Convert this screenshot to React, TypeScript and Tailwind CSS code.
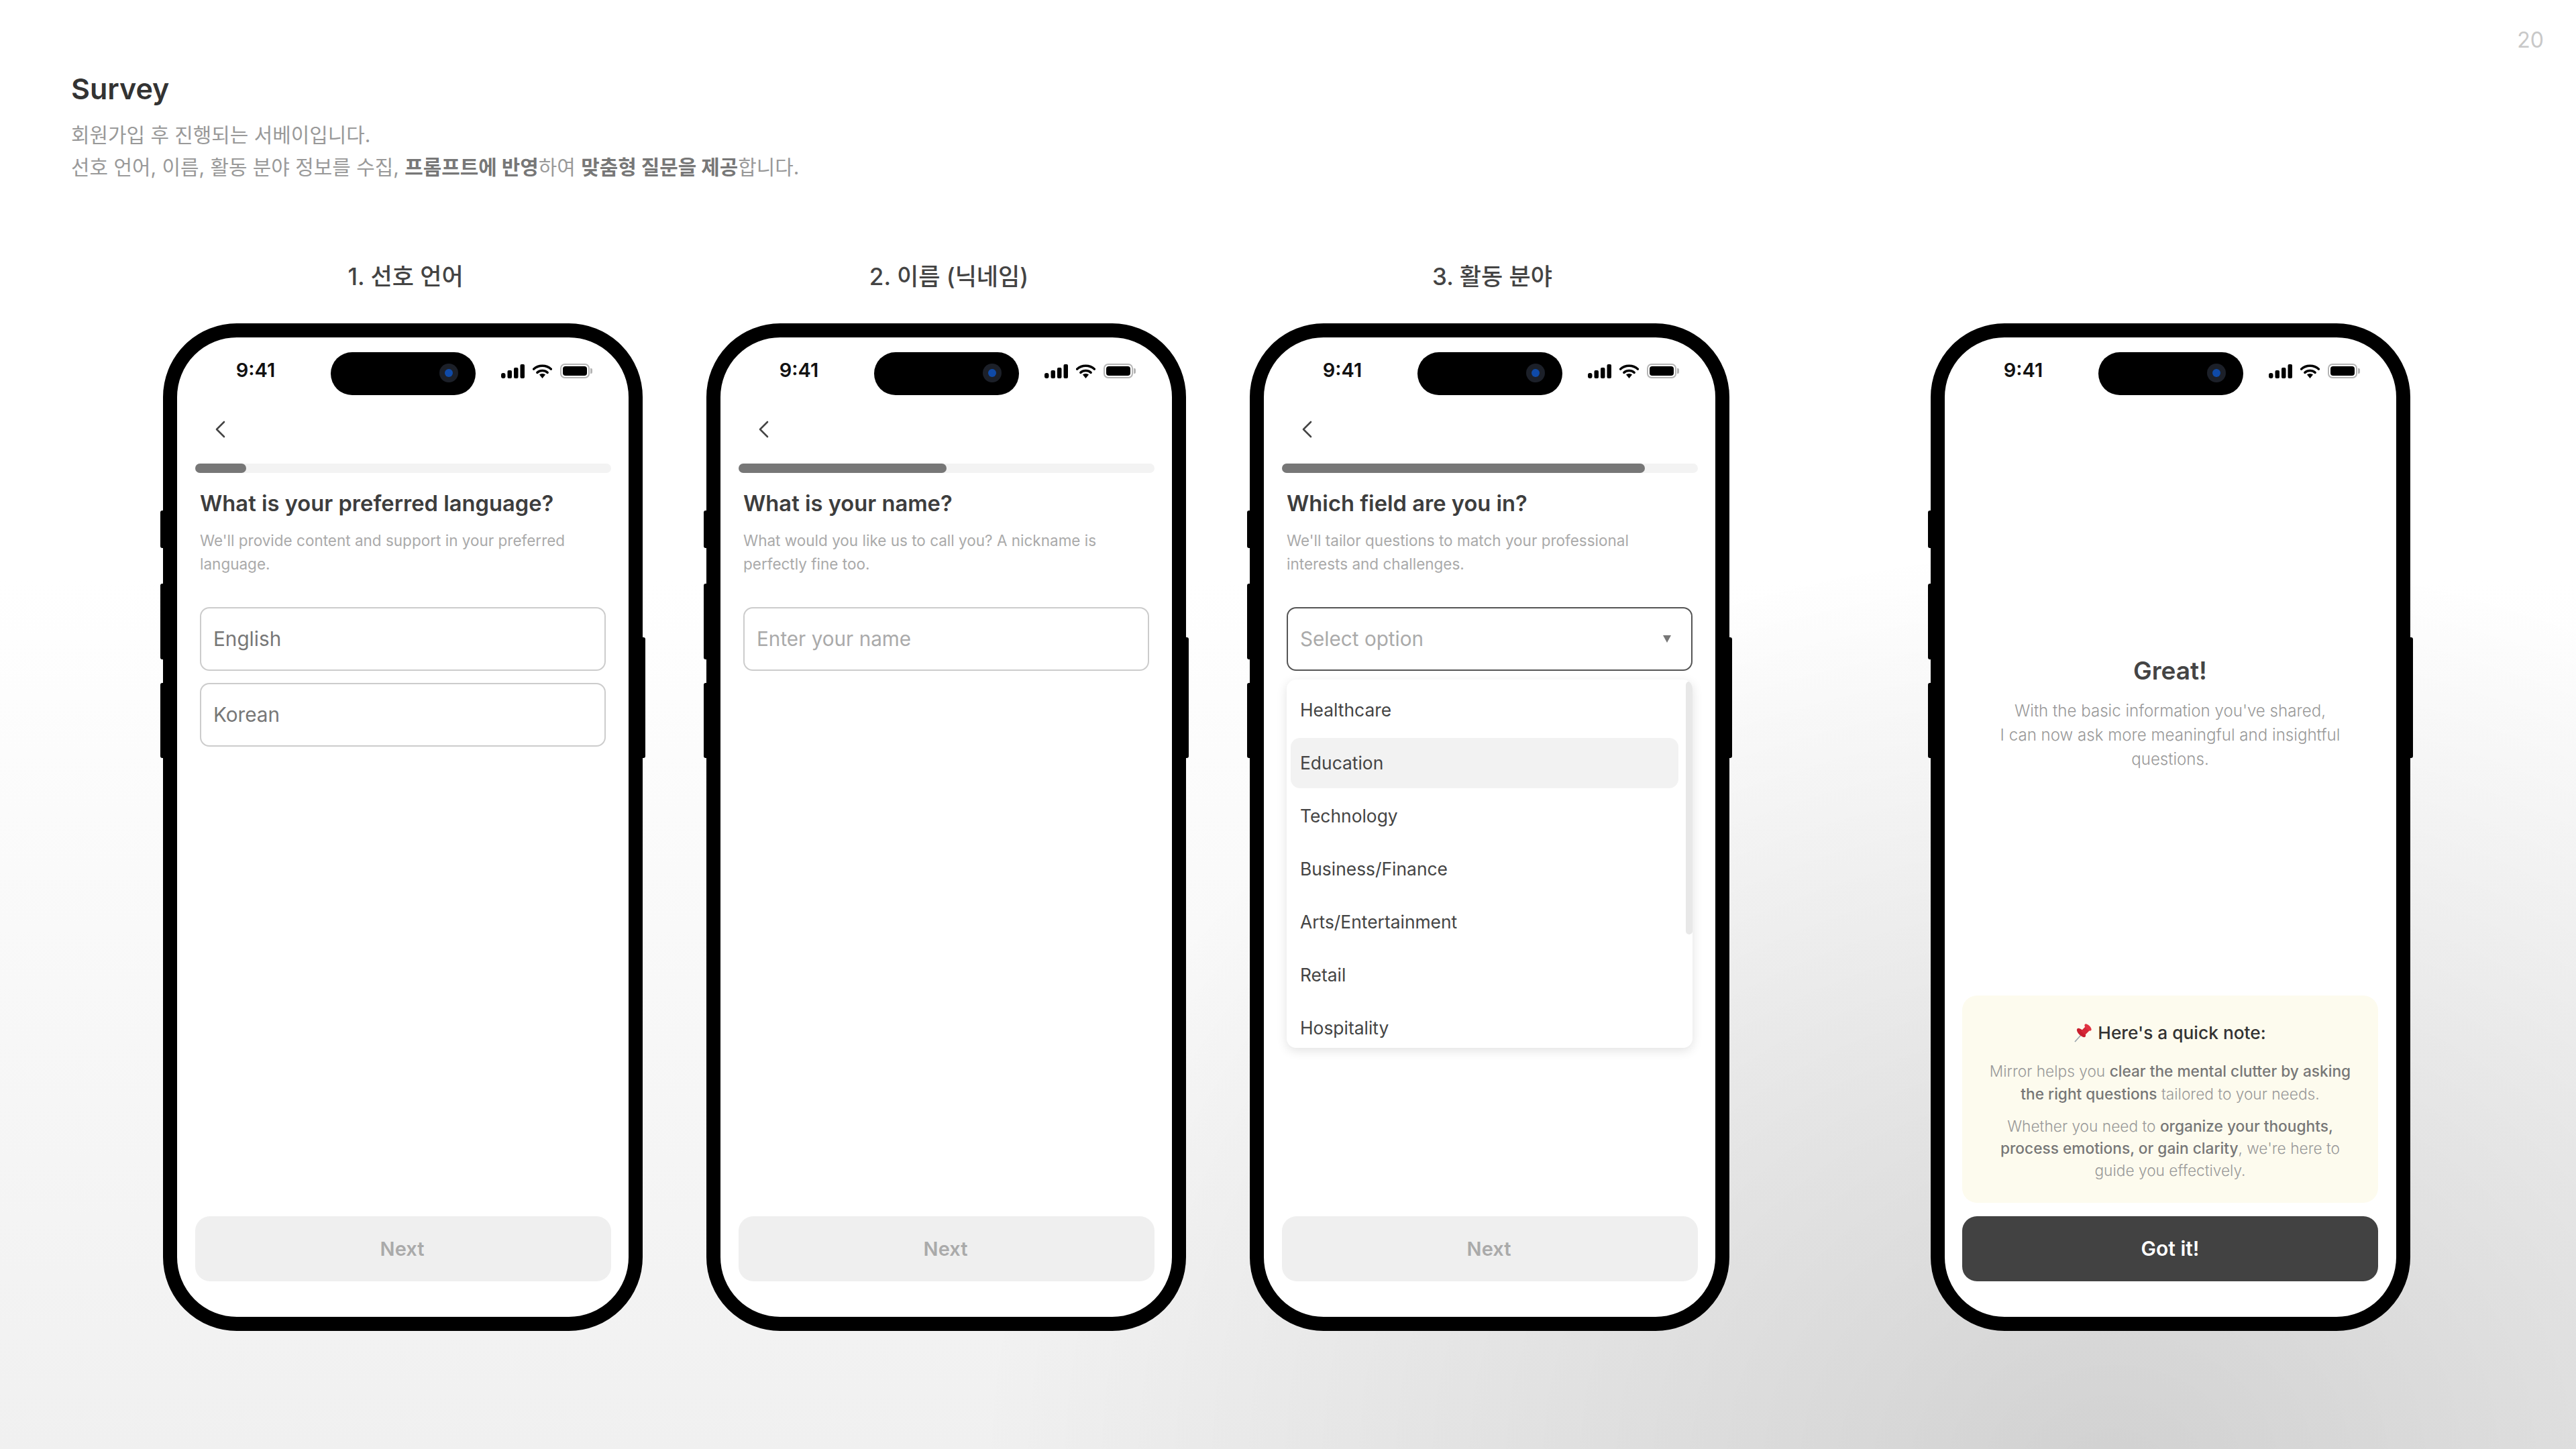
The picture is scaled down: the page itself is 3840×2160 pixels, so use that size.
import React from "react";

const SignalIcon = () => (
  <svg width="35" height="21" viewBox="0 0 35 21" fill="#000" className="block">
    <rect x="0" y="13" width="6.5" height="8" rx="3" />
    <rect x="9.5" y="9" width="6.5" height="12" rx="2" />
    <rect x="19" y="5" width="6.5" height="16" rx="2" />
    <rect x="28.5" y="0" width="6.5" height="21" rx="2" />
  </svg>
);

const WifiIcon = () => (
  <svg width="29" height="21" viewBox="0 0 29 21" fill="none" className="block">
    <path d="M1.5 7.2C8.8 0.6 20.2 0.6 27.5 7.2" stroke="#000" strokeWidth="3.4" strokeLinecap="round" />
    <path d="M6.8 12.4C11.2 8.6 17.8 8.6 22.2 12.4" stroke="#000" strokeWidth="3.4" strokeLinecap="round" />
    <path d="M10 15.6C12.6 13.6 16.4 13.6 19 15.6L14.5 21Z" fill="#000" />
  </svg>
);

const BatteryIcon = () => (
  <div className="flex items-center">
    <div className="w-[44px] h-[22px] rounded-[7px] border-2 border-[#b5b5b5] p-[2px]">
      <div className="w-full h-full rounded-[4px] bg-black" />
    </div>
    <div className="ml-[1px] w-[3px] h-[8px] rounded-r-[2px] bg-[#b5b5b5]" />
  </div>
);

const StatusBar = () => (
  <div className="flex items-center pt-[22px] shrink-0">
    <div className="w-[229px] pl-[5px] mb-[10px] text-center text-[29px] leading-[34px] font-semibold text-[#111]">
      9:41
    </div>
    <div className="relative w-[216px] h-[64px] rounded-full bg-black shrink-0">
      <div className="absolute left-[162px] top-[17px] w-[28px] h-[28px] rounded-full bg-[#1c2029]">
        <div className="ml-[8px] mt-[8px] w-[12px] h-[12px] rounded-full bg-[#0f4aa8]" />
      </div>
    </div>
    <div className="flex items-center pl-[38px] mb-[8px]">
      <SignalIcon />
      <div className="ml-[12px]">
        <WifiIcon />
      </div>
      <div className="ml-[12px]">
        <BatteryIcon />
      </div>
    </div>
  </div>
);

const Phone = ({ children }: { children: React.ReactNode }) => (
  <div className="relative w-[715px] h-[1502px] rounded-[110px] border-[21px] border-black bg-white shrink-0">
    {/* side buttons */}
    <div className="absolute left-[-25px] top-[258px] w-[4px] h-[56px] rounded-l-[3px] bg-black" />
    <div className="absolute left-[-25px] top-[367px] w-[4px] h-[113px] rounded-l-[3px] bg-black" />
    <div className="absolute left-[-25px] top-[515px] w-[4px] h-[112px] rounded-l-[3px] bg-black" />
    <div className="absolute right-[-25px] top-[447px] w-[4px] h-[180px] rounded-r-[3px] bg-black" />
    <div className="flex flex-col h-full">
      <StatusBar />
      {children}
    </div>
  </div>
);

const BackChevron = () => (
  <svg width="16" height="26" viewBox="0 0 16 26" fill="none" className="block ml-[29px] mt-[38px]">
    <path d="M14 2L3 13L14 24" stroke="#444" strokeWidth="2.6" strokeLinecap="round" strokeLinejoin="round" />
  </svg>
);

const Progress = ({ width }: { width: number }) => (
  <div className="mt-[38px] h-[14px] rounded-full bg-[#f3f3f3]">
    <div className="h-full rounded-full bg-[#777]" style={{ width }} />
  </div>
);

const Question = ({ title, lines }: { title: string; lines: string[] }) => (
  <div className="pl-[7px]">
    <div className="mt-[25px] text-[32.7px] leading-[40px] font-semibold text-[#3d3d3d] whitespace-nowrap">{title}</div>
    <div className="mt-[18px] text-[22.5px] leading-[35px] text-[#aaa] whitespace-nowrap">
      {lines[0]}
      <br />
      {lines[1]}
    </div>
  </div>
);

const NextButton = () => (
  <div className="mb-[53px] h-[97px] pr-[3px] rounded-[22px] bg-[#efefef] flex items-center justify-center text-[29px] font-semibold text-[#aaa]">
    Next
  </div>
);

const SurveyStep = ({
  progress,
  title,
  lines,
  children,
}: {
  progress: number;
  title: string;
  lines: string[];
  children: React.ReactNode;
}) => (
  <div className="flex flex-col flex-1 pl-[27px] pr-[26px]">
    <BackChevron />
    <Progress width={progress} />
    <Question title={title} lines={lines} />
    <div className="flex-1 mt-[47px] ml-[7px] w-[605px]">{children}</div>
    <NextButton />
  </div>
);

const TextField = ({ label, muted }: { label: string; muted?: boolean }) => (
  <div
    className={`h-[95px] rounded-[14px] border-2 border-[#ccc] flex items-center pl-[18px] text-[29.7px] ${
      muted ? "text-[#aaa]" : "text-[#777]"
    }`}
  >
    {label}
  </div>
);

const options = ["Healthcare", "Education", "Technology", "Business/Finance", "Arts/Entertainment", "Retail", "Hospitality"];

const Dropdown = () => (
  <>
    <div className="h-[95px] rounded-[14px] border-2 border-[#555] flex items-center justify-between pl-[18px] pr-[30px] text-[29.7px] text-[#aaa]">
      Select option
      <svg width="12" height="11" viewBox="0 0 12 11" className="block">
        <path d="M0 0H12L6 11Z" fill="#777" />
      </svg>
    </div>
    <div className="relative mt-[13px] h-[549px] overflow-hidden rounded-[14px] bg-white shadow-[0_4px_16px_rgba(0,0,0,0.12)] pt-[8px] pl-[6px]">
      <div className="flex flex-col gap-[4px]">
        {options.map((option, i) => (
          <div
            key={option}
            className={`w-[578px] h-[75px] shrink-0 rounded-[14px] flex items-center pl-[14px] text-[26.4px] text-[#444] ${
              i === 1 ? "bg-[#f2f2f2]" : ""
            }`}
          >
            {option}
          </div>
        ))}
      </div>
      <div className="absolute right-0 top-[3px] w-[10px] h-[377px] rounded-full bg-[#e8e8e8]" />
    </div>
  </>
);

const PinIcon = () => (
  <svg width="27" height="28" viewBox="0 0 27 28" className="block">
    <line x1="1" y1="27" x2="10" y2="17" stroke="#9aa4ad" strokeWidth="1.6" />
    <ellipse cx="10.5" cy="13.5" rx="8.5" ry="4" fill="#c91f2e" transform="rotate(45 10.5 13.5)" />
    <path d="M10 11L18 3L24 9L16 17Z" fill="#d62837" />
    <ellipse cx="20.5" cy="5.5" rx="6.5" ry="3.2" fill="#e03342" transform="rotate(45 20.5 5.5)" />
  </svg>
);

const GreatStep = () => (
  <div className="flex flex-col flex-1 pl-[26px] pr-[27px]">
    <div className="mt-[389px] text-center text-[37px] leading-[44px] font-semibold text-[#444]">Great!</div>
    <div className="mt-[20px] text-center text-[24.1px] leading-[36px] font-light text-[#999] whitespace-nowrap">
      With the basic information you've shared,
      <br />I can now ask more meaningful and insightful
      <br />
      questions.
    </div>
    <div className="flex-1" />
    <div className="h-[309px] rounded-[22px] bg-[#fdfbee] pt-[38px] text-center whitespace-nowrap">
      <div className="flex items-center justify-center gap-[8px] h-[36px] text-[26.3px] font-medium text-[#333]">
        <PinIcon />
        Here's a quick note:
      </div>
      <div className="mt-[22px] text-[22.7px] leading-[34px] font-light text-[#999]">
        Mirror helps you <span className="font-medium text-[#777]">clear the mental clutter by asking</span>
        <br />
        <span className="font-medium text-[#777]">the right questions</span> tailored to your needs.
      </div>
      <div className="mt-[14px] text-[22.7px] leading-[33px] font-light text-[#999]">
        Whether you need to <span className="font-medium text-[#777]">organize your thoughts,</span>
        <br />
        <span className="font-medium text-[#777]">process emotions, or gain clarity</span>, we're here to
        <br />
        guide you effectively.
      </div>
    </div>
    <div className="mt-[20px] mb-[53px] h-[97px] rounded-[22px] bg-[#424242] flex items-center justify-center text-[30px] font-semibold text-white">
      Got it!
    </div>
  </div>
);

const PhoneColumn = ({ label, children }: { label?: string; children: React.ReactNode }) => (
  <div className="flex flex-col items-center shrink-0">
    <div className="h-[48px] mb-[46px] pl-[8px] text-[35px] leading-[48px] font-medium text-[#444] whitespace-nowrap">{label}</div>
    <Phone>{children}</Phone>
  </div>
);

export default function App() {
  return (
    <div className="relative w-[3840px] h-[2160px] overflow-hidden font-['Inter','Noto_Sans_CJK_KR',sans-serif] bg-[radial-gradient(ellipse_1700px_1400px_at_3150px_2200px,rgba(0,0,0,0.13),rgba(0,0,0,0)),linear-gradient(to_bottom,#ffffff_40%,#f0f0f0_100%)]">
      <div className="absolute right-[48px] top-[40px] text-[32px] leading-[40px] text-[#c8c8c8]">20</div>

      <div className="pl-[106px] pt-[104px]">
        <h1 className="text-[43px] leading-[56px] font-semibold text-[#333]">Survey</h1>
        <p className="mt-[17px] text-[29.9px] leading-[48px] text-[#999]">
          회원가입 후 진행되는 서베이입니다.
          <br />
          선호 언어, 이름, 활동 분야 정보를 수집, <b className="font-bold text-[#777]">프롬프트에 반영</b>하여{" "}
          <b className="font-bold text-[#777]">맞춤형 질문을 제공</b>합니다.
        </p>
      </div>

      <div className="flex pl-[243px] mt-[115px]">
        <PhoneColumn label="1. 선호 언어">
          <SurveyStep
            progress={76}
            title="What is your preferred language?"
            lines={["We'll provide content and support in your preferred", "language."]}
          >
            <div className="flex flex-col gap-[18px]">
              <TextField label="English" />
              <TextField label="Korean" />
            </div>
          </SurveyStep>
        </PhoneColumn>
        <div className="ml-[95px]">
          <PhoneColumn label="2. 이름 (닉네임)">
            <SurveyStep
              progress={310}
              title="What is your name?"
              lines={["What would you like us to call you? A nickname is", "perfectly fine too."]}
            >
              <TextField label="Enter your name" muted />
            </SurveyStep>
          </PhoneColumn>
        </div>
        <div className="ml-[95px]">
          <PhoneColumn label="3. 활동 분야">
            <SurveyStep
              progress={541}
              title="Which field are you in?"
              lines={["We'll tailor questions to match your professional", "interests and challenges."]}
            >
              <Dropdown />
            </SurveyStep>
          </PhoneColumn>
        </div>
        <div className="ml-[300px]">
          <PhoneColumn>
            <GreatStep />
          </PhoneColumn>
        </div>
      </div>
    </div>
  );
}
